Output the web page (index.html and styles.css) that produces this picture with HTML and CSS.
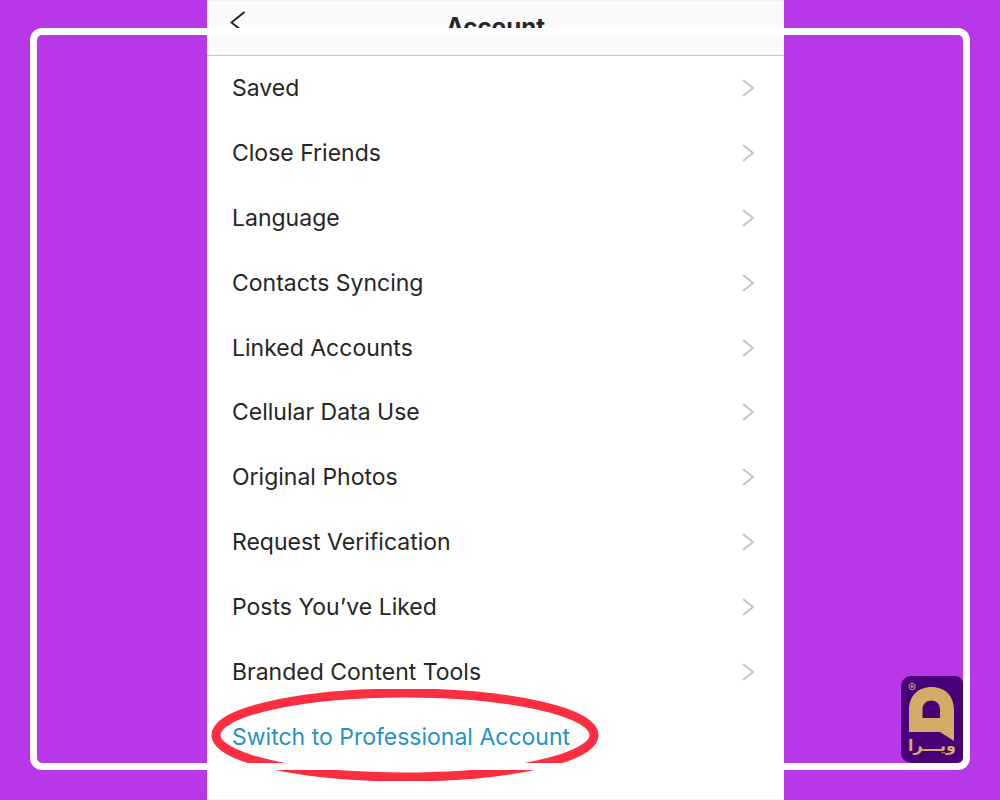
FILE: index.html
```html
<!DOCTYPE html>
<html lang="en">
<head>
<meta charset="utf-8">
<meta name="viewport" content="width=device-width, initial-scale=1">
<title>Account</title>
<link rel="stylesheet" href="styles.css">
</head>
<body>
<div class="poster">
  <main class="phone">
    <header class="topbar">
      <button class="back" type="button" aria-label="Back">
        <svg width="16" height="24" viewBox="0 0 16 24"><path d="M14.500 1 1.500 11.500l13 10.500"/></svg>
      </button>
      <h1 class="title">Account</h1>
    </header>
    <nav class="list">
      <a class="row" href="#">Saved<svg class="chevron" viewBox="0 0 12 18"><path d="M1 1l10 8L1 17"/></svg></a>
      <a class="row" href="#">Close Friends<svg class="chevron" viewBox="0 0 12 18"><path d="M1 1l10 8L1 17"/></svg></a>
      <a class="row" href="#">Language<svg class="chevron" viewBox="0 0 12 18"><path d="M1 1l10 8L1 17"/></svg></a>
      <a class="row" href="#">Contacts Syncing<svg class="chevron" viewBox="0 0 12 18"><path d="M1 1l10 8L1 17"/></svg></a>
      <a class="row" href="#">Linked Accounts<svg class="chevron" viewBox="0 0 12 18"><path d="M1 1l10 8L1 17"/></svg></a>
      <a class="row" href="#">Cellular Data Use<svg class="chevron" viewBox="0 0 12 18"><path d="M1 1l10 8L1 17"/></svg></a>
      <a class="row" href="#">Original Photos<svg class="chevron" viewBox="0 0 12 18"><path d="M1 1l10 8L1 17"/></svg></a>
      <a class="row" href="#">Request Verification<svg class="chevron" viewBox="0 0 12 18"><path d="M1 1l10 8L1 17"/></svg></a>
      <a class="row" href="#">Posts You’ve Liked<svg class="chevron" viewBox="0 0 12 18"><path d="M1 1l10 8L1 17"/></svg></a>
      <a class="row" href="#">Branded Content Tools<svg class="chevron" viewBox="0 0 12 18"><path d="M1 1l10 8L1 17"/></svg></a>
      <a class="row switch" href="#"><span class="circled">Switch to Professional Account<svg class="ring" viewBox="0 0 390 92" preserveAspectRatio="none"><ellipse cx="195" cy="46" rx="190" ry="42"/></svg></span></a>
    </nav>
  </main>
  <div class="logo">
    <span class="mark">®</span>
    <svg class="emblem" width="46" height="54" viewBox="0 0 46 54"><path fill-rule="evenodd" d="M0 45V23C0 9 9 0 22.500 0S45 9 45 23v31L31 45zM13.500 31H31V22.500c0-5.500-3.500-9-8.750-9s-8.750 3.500-8.750 9z"/></svg>
    <span class="brand" lang="fa" dir="rtl">ویـــرا</span>
  </div>
  <div class="frame"></div>
</div>
</body>
</html>
```
FILE: styles.css
```css
* { box-sizing: border-box; }

body {
  margin: 0;
  font-family: Inter, "Liberation Sans", sans-serif;
  color: #262626;
}

.poster {
  position: relative;
  display: flex;
  min-height: 100vh;
  background: #b737e9;
}

.phone {
  display: flex;
  flex-direction: column;
  width: 57.7%;
  margin-left: 20.7%;
  background: #fff;
  border-bottom: 1px solid #f1f0fb;
}

.topbar {
  display: grid;
  grid-template-columns: 40px 1fr 40px;
  align-items: start;
  height: 56px;
  padding: 10px 20px 0;
  background: #fafafa;
  border-top: 1px solid #f3ecfa;
  border-bottom: 1px solid #c4c4c4;
}

.back {
  display: flex;
  padding: 0 3px;
  border: 0;
  background: none;
}

.back svg {
  fill: none;
  stroke: #262626;
  stroke-width: 2;
}

.title {
  margin: 0;
  font-size: 24px;
  line-height: 32px;
  font-weight: 700;
  text-align: center;
}

.list {
  flex: 1;
  display: grid;
  grid-auto-rows: 1fr;
  padding-bottom: 30px;
}

.row {
  display: flex;
  align-items: center;
  justify-content: space-between;
  padding: 0 30px 0 25px;
  font-size: 23px;
  line-height: 32px;
  color: #262626;
  text-decoration: none;
}

.chevron {
  width: 12px;
  height: 18px;
  fill: none;
  stroke: #c3c3c3;
  stroke-width: 2;
}

.switch { color: #2492c8; }

.circled { position: relative; }

.ring {
  position: absolute;
  left: -21px;
  top: -32px;
  width: calc(100% + 50px);
  height: 92px;
  fill: none;
  stroke: #fb2f40;
  stroke-width: 9;
}

.frame {
  position: absolute;
  inset: 28px 30px 30px;
  border: 7px solid #fff;
  border-radius: 12px;
  pointer-events: none;
}

.logo {
  position: absolute;
  right: 37px;
  bottom: 37px;
  display: flex;
  flex-direction: column;
  align-items: center;
  width: 62px;
  height: 87px;
  padding-top: 11px;
  border-radius: 10px 8px 4px 10px;
  background: #470078;
  color: #d3ac68;
}

.emblem { fill: #d3ac68; }

.mark {
  position: absolute;
  left: 7px;
  top: 6px;
  font-size: 12px;
  line-height: 12px;
}

.brand {
  margin-top: -4px;
  font-family: "DejaVu Sans", sans-serif;
  font-size: 16px;
  line-height: 18px;
  font-weight: 700;
}
```
